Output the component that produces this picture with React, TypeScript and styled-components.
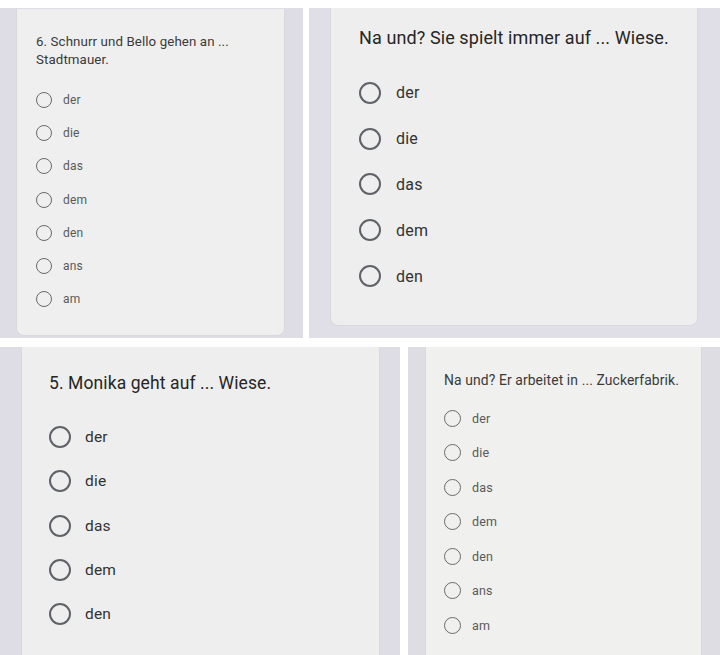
import React from "react";
import styled, { createGlobalStyle } from "styled-components";

const Global = createGlobalStyle`
  html, body { margin: 0; padding: 0; background: #ffffff; }
  body { font-family: Roboto, "Liberation Sans", Arial, sans-serif; }
  * { box-sizing: border-box; }
`;

const Collage = styled.div`
  width: 720px;
  height: 655px;
  overflow: hidden;
  padding-top: 8px;
  display: flex;
  flex-direction: column;
  gap: 9px;
`;

const Row = styled.div<{ $h: number; $cols: string; $gap: number }>`
  display: grid;
  grid-template-columns: ${(p) => p.$cols};
  column-gap: ${(p) => p.$gap}px;
  height: ${(p) => p.$h}px;
  flex-shrink: 0;
`;

const Panel = styled.div<{ $padL: number; $padT: number; $bg: string }>`
  background: ${(p) => p.$bg};
  padding-left: ${(p) => p.$padL}px;
  padding-top: ${(p) => p.$padT}px;
  overflow: hidden;
`;

const Card = styled.div<{
  $w: number;
  $h?: number;
  $pad: string;
  $bg: string;
}>`
  width: ${(p) => p.$w}px;
  ${(p) => (p.$h ? `height: ${p.$h}px;` : "min-height: 400px;")}
  background: ${(p) => p.$bg};
  border: 1px solid #d9d9dd;
  border-top: none;
  border-radius: 0 0 8px 8px;
  padding: ${(p) => p.$pad};
  display: flex;
  flex-direction: column;
`;

const Question = styled.div<{ $size: number; $lh: number; $color: string; $mb: number }>`
  font-size: ${(p) => p.$size}px;
  line-height: ${(p) => p.$lh}px;
  color: ${(p) => p.$color};
  margin-bottom: ${(p) => p.$mb}px;
  letter-spacing: 0.1px;
`;

const Option = styled.div<{ $h: number }>`
  display: flex;
  align-items: center;
  height: ${(p) => p.$h}px;
`;

const Radio = styled.span<{ $d: number; $b: number; $color: string }>`
  width: ${(p) => p.$d}px;
  height: ${(p) => p.$d}px;
  border: ${(p) => p.$b}px solid ${(p) => p.$color};
  border-radius: 50%;
  flex-shrink: 0;
`;

const Label = styled.span<{ $size: number; $gap: number; $color: string }>`
  font-size: ${(p) => p.$size}px;
  color: ${(p) => p.$color};
  margin-left: ${(p) => p.$gap}px;
  letter-spacing: 0.2px;
`;

type Spec = {
  question: string;
  options: string[];
  qSize: number;
  qLh: number;
  qColor: string;
  qMb: number;
  rowH: number;
  radioD: number;
  radioB: number;
  radioColor: string;
  labelSize: number;
  labelGap: number;
  labelColor: string;
};

const Form: React.FC<{ s: Spec }> = ({ s }) => (
  <>
    <Question $size={s.qSize} $lh={s.qLh} $color={s.qColor} $mb={s.qMb}>
      {s.question}
    </Question>
    {s.options.map((o) => (
      <Option key={o} $h={s.rowH}>
        <Radio $d={s.radioD} $b={s.radioB} $color={s.radioColor} />
        <Label $size={s.labelSize} $gap={s.labelGap} $color={s.labelColor}>
          {o}
        </Label>
      </Option>
    ))}
  </>
);

const five = ["der", "die", "das", "dem", "den"];
const seven = ["der", "die", "das", "dem", "den", "ans", "am"];

const small = {
  qColor: "#3a3a3a",
  radioB: 1.6,
  radioColor: "#6a6a6a",
  labelColor: "#5a5a5a",
};
const large = {
  qColor: "#262626",
  radioB: 2,
  radioColor: "#5f6368",
  labelColor: "#333333",
};

export default function App() {
  return (
    <>
      <Global />
      <Collage>
        <Row $h={330} $cols="303px 411px" $gap={6}>
          <Panel $padL={16} $padT={1} $bg="#dedde5">
            <Card $w={269} $h={327} $pad="24px 19px 0 19px" $bg="#efefef">
              <Form
                s={{
                  question: "6. Schnurr und Bello gehen an ... Stadtmauer.",
                  options: seven,
                  qSize: 13.3,
                  qLh: 18,
                  qMb: 14,
                  rowH: 33.3,
                  radioD: 16,
                  labelSize: 12,
                  labelGap: 11,
                  ...small,
                }}
              />
            </Card>
          </Panel>
          <Panel $padL={21} $padT={0} $bg="#e0dfe7">
            <Card $w={368} $h={318} $pad="18px 28px 0 28px" $bg="#eeeeee">
              <Form
                s={{
                  question: "Na und? Sie spielt immer auf ... Wiese.",
                  options: five,
                  qSize: 18,
                  qLh: 24,
                  qMb: 20,
                  rowH: 45.8,
                  radioD: 22,
                  labelSize: 16,
                  labelGap: 15,
                  ...large,
                }}
              />
            </Card>
          </Panel>
        </Row>
        <Row $h={308} $cols="400px 312px" $gap={8}>
          <Panel $padL={21} $padT={0} $bg="#dedde5">
            <Card $w={359} $pad="24px 27px 0 27px" $bg="#eeeeee">
              <Form
                s={{
                  question: "5. Monika geht auf ... Wiese.",
                  options: five,
                  qSize: 17.5,
                  qLh: 24,
                  qMb: 20,
                  rowH: 44.3,
                  radioD: 22,
                  labelSize: 15.5,
                  labelGap: 14,
                  ...large,
                }}
              />
            </Card>
          </Panel>
          <Panel $padL={17} $padT={0} $bg="#dedde4">
            <Card $w={277} $pad="23px 18px 0 18px" $bg="#f0f0ef">
              <Form
                s={{
                  question: "Na und? Er arbeitet in ... Zuckerfabrik.",
                  options: seven,
                  qSize: 13.9,
                  qLh: 20,
                  qMb: 11,
                  rowH: 34.5,
                  radioD: 17,
                  labelSize: 12.5,
                  labelGap: 11,
                  ...small,
                }}
              />
            </Card>
          </Panel>
        </Row>
      </Collage>
    </>
  );
}
